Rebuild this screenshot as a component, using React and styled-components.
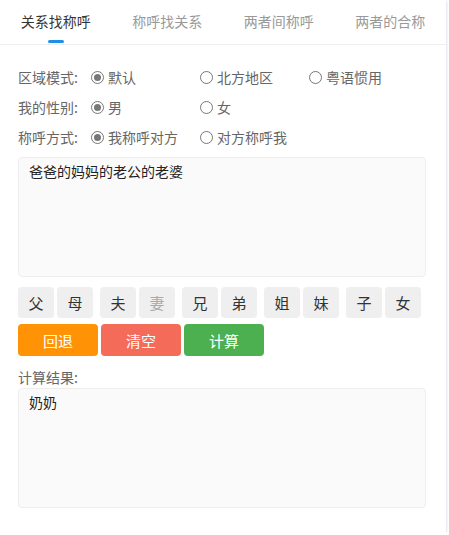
import { useState } from 'react';
import styled, { createGlobalStyle } from 'styled-components';

const GlobalStyle = createGlobalStyle`
    body {
        margin: 0;
        background: #fff;
        font-family: "Noto Sans CJK SC", "Liberation Sans", sans-serif;
    }
`

const Panel = styled.div`
    width: 446px;
    background: #fff;
    box-shadow: 1px 1px 2px rgba(200, 210, 225, 0.6);
    padding-bottom: 24px;
`

const TabBar = styled.div`
    display: flex;
    height: 44px;
    border-bottom: 1px solid #eee;
`

const Tab = styled.div`
    flex: 1;
    position: relative;
    text-align: center;
    line-height: 42px;
    font-size: 14px;
    color: ${props => props.active ? '#333' : '#999'};
    cursor: pointer;

    &::after {
        content: '';
        display: ${props => props.active ? 'block' : 'none'};
        position: absolute;
        left: 50%;
        bottom: 1px;
        width: 16px;
        height: 3px;
        margin-left: -8px;
        border-radius: 2px;
        background: #1e8fe8;
    }
`

const Content = styled.div`
    padding: 17px 20px 0 18px;
`

const Row = styled.div`
    display: flex;
    align-items: center;
    height: 30px;
    font-size: 14px;
    color: #666;
`

const RowLabel = styled.div`
    width: 73px;
`

const Option = styled.label`
    width: 109px;
    display: flex;
    align-items: center;
    gap: 4px;
    cursor: pointer;
`

const Circle = styled.span`
    box-sizing: border-box;
    width: 13px;
    height: 13px;
    border-radius: 50%;
    border: 1px solid #777;
    display: flex;
    align-items: center;
    justify-content: center;

    &::after {
        content: '';
        display: ${props => props.checked ? 'block' : 'none'};
        width: 7px;
        height: 7px;
        border-radius: 50%;
        background: #777;
    }
`

const Box = styled.textarea`
    display: block;
    box-sizing: border-box;
    width: 100%;
    height: 120px;
    margin: ${props => props.top || 0}px 0 0;
    padding: 3px 10px;
    border: 1px solid #eee;
    border-radius: 4px;
    background: #fafafa;
    resize: none;
    outline: none;
    font-family: inherit;
    font-size: 14px;
    line-height: 20px;
    color: #222;
`

const Keys = styled.div`
    display: flex;
    gap: 7px;
    margin-top: 10px;
`

const KeyPair = styled.div`
    display: flex;
    gap: 3px;
`

const Key = styled.button`
    width: 36px;
    height: 31px;
    border: none;
    border-radius: 4px;
    background: #efefef;
    font-family: inherit;
    font-size: 15px;
    color: ${props => props.disabled ? '#aaa' : '#333'};
    padding: 0;
    cursor: pointer;
`

const Actions = styled.div`
    display: flex;
    gap: 3px;
    margin-top: 6px;
`

const ActionButton = styled.button`
    width: 80px;
    height: 32px;
    border: none;
    border-radius: 4px;
    background: ${props => props.color};
    color: #fff;
    font-family: inherit;
    font-size: 15px;
    padding: 0;
    cursor: pointer;
`

const ResultLabel = styled.div`
    margin-top: 10px;
    line-height: 22px;
    font-size: 14px;
    color: #666;
`

const tabs = ['关系找称呼', '称呼找关系', '两者间称呼', '两者的合称']

const rows = [
    { label: '区域模式:', options: ['默认', '北方地区', '粤语惯用'] },
    { label: '我的性别:', options: ['男', '女'] },
    { label: '称呼方式:', options: ['我称呼对方', '对方称呼我'] },
]

const keyPairs = [['父', '母'], ['夫', '妻'], ['兄', '弟'], ['姐', '妹'], ['子', '女']]

const App = () => {

    const [activeTab, setActiveTab] = useState(0)
    const [picked, setPicked] = useState([0, 0, 0])
    const [text, setText] = useState('爸爸的妈妈的老公的老婆')

    const pick = (row, idx) => {
        const next = [...picked]
        next[row] = idx
        setPicked(next)
    }

    return (
        <Panel>
            <GlobalStyle />
            <TabBar>
                {tabs.map((t, i) => (
                    <Tab key={t} active={i === activeTab} onClick={() => setActiveTab(i)}>{t}</Tab>
                ))}
            </TabBar>
            <Content>
                {rows.map((r, ri) => (
                    <Row key={r.label}>
                        <RowLabel>{r.label}</RowLabel>
                        {r.options.map((o, oi) => (
                            <Option key={o} onClick={() => pick(ri, oi)}>
                                <Circle checked={picked[ri] === oi} />
                                {o}
                            </Option>
                        ))}
                    </Row>
                ))}
                <Box top={5} value={text} onChange={(e) => setText(e.target.value)} />
                <Keys>
                    {keyPairs.map((pair) => (
                        <KeyPair key={pair[0]}>
                            {pair.map((k) => (
                                <Key key={k} disabled={k === '妻'}>{k}</Key>
                            ))}
                        </KeyPair>
                    ))}
                </Keys>
                <Actions>
                    <ActionButton color="#ff9305">回退</ActionButton>
                    <ActionButton color="#f56b59">清空</ActionButton>
                    <ActionButton color="#4caf50">计算</ActionButton>
                </Actions>
                <ResultLabel>计算结果:</ResultLabel>
                <Box value="奶奶" readOnly />
            </Content>
        </Panel>
    )
}

export default App;
